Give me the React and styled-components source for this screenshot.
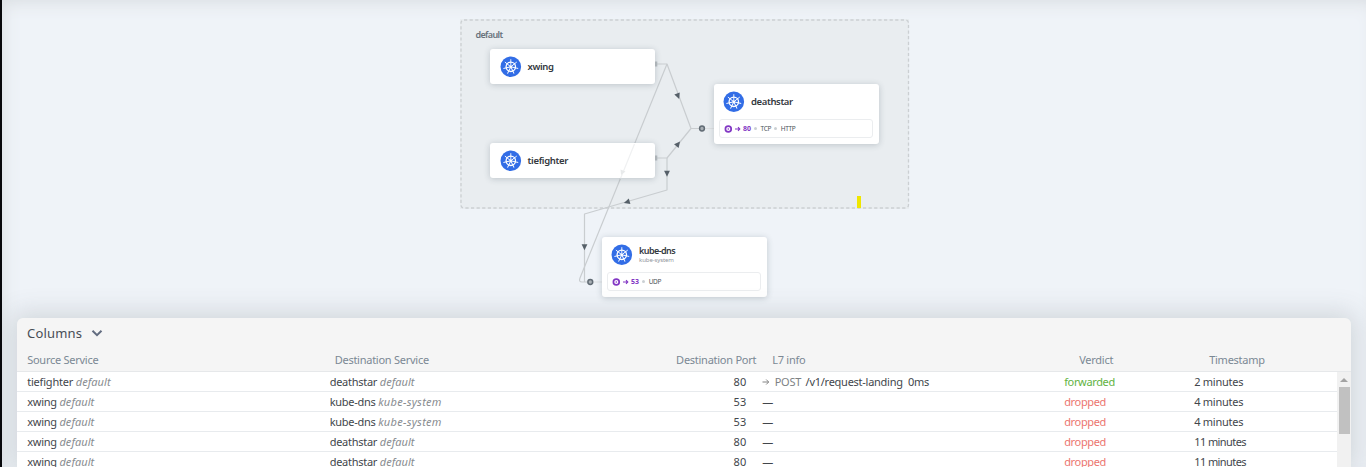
import React from 'react';
import styled, { createGlobalStyle } from 'styled-components';

const Global = createGlobalStyle`
  body { margin: 0; background: #eff3f8; overflow: hidden; font-family: "Noto Sans", "Open Sans", sans-serif; }
  * { box-sizing: border-box; }
`;

const Screen = styled.div`
  position: relative;
  width: 1366px;
  height: 467px;
  overflow: hidden;
  display: flex;
  flex-direction: column;
  background: #eff3f8;
  border-left: 2px solid #08090c;
  box-shadow: inset 0 12px 18px -10px #d9dde1, inset 14px 0 18px -12px #dfe5e9;
`;

const Canvas = styled.div`
  position: relative;
  flex: 0 0 318px;
  margin-left: -2px;
`;

const Namespace = styled.div`
  position: absolute;
  left: 460px;
  top: 19px;
  width: 449px;
  height: 190px;
  background: #e9edf0;
  padding: 9px 15.5px;
  font-size: 9px;
  line-height: 13px;
  font-weight: 600;
  color: #68717b;
  letter-spacing: -0.65px;
`;

const Layer = styled.svg`
  position: absolute;
  left: 0;
  top: 0;
`;

const Card = styled.div`
  position: absolute;
  left: ${p => p.$x}px;
  top: ${p => p.$y}px;
  width: 165.4px;
  height: ${p => (p.$tall ? 60.5 : 35.4)}px;
  border-radius: 3px;
  background: #fff;
  box-shadow: 0 1px 6px rgba(50, 65, 80, 0.24);
  padding: 7px 6px 0 5.5px;
`;

const CardHead = styled.div`
  display: flex;
  align-items: center;
  height: 22px;
  padding-left: 4px;
  gap: 6px;
`;

const Names = styled.div`
  display: flex;
  flex-direction: column;
`;

const Name = styled.span`
  font-size: ${p => p.$size || 10}px;
  line-height: 12px;
  font-weight: 600;
  color: #33383e;
  letter-spacing: ${p => p.$ls || 0}px;
`;

const Sub = styled.span`
  font-size: 6px;
  line-height: 7px;
  letter-spacing: -0.1px;
  color: #90959b;
`;

const PortBox = styled.div`
  display: flex;
  align-items: center;
  height: 19px;
  margin-top: 6.5px;
  padding-left: 4px;
  border: 1px solid #ebedef;
  border-radius: 3px;
  font-size: 6.5px;
  color: #4d535a;
`;

const PortNumber = styled.span`
  font-weight: 700;
  color: #8237c4;
  font-size: 7px;
`;

const Protocol = styled.span`
  display: flex;
  align-items: center;
  letter-spacing: -0.35px;
  &::before {
    content: "";
    width: 3px;
    height: 3px;
    border-radius: 50%;
    background: #cbd0d4;
    margin: 0 3.3px;
  }
`;

const Marker = styled.i`
  position: absolute;
  left: 857px;
  top: 196px;
  width: 4px;
  height: 12px;
  background: #efe600;
`;

const Panel = styled.section`
  position: relative;
  flex: 1 0 auto;
  width: 1334px;
  margin-left: 15.4px;
  height: 149px;
  border-radius: 6px 6px 0 0;
  background: #f5f5f5;
  box-shadow: 0 0 26px 5px rgba(80, 92, 98, 0.19);
`;

const Toolbar = styled.div`
  display: flex;
  align-items: center;
  gap: 9px;
  height: 29px;
  padding: 1px 0 0 9.6px;
  font-size: 13px;
  letter-spacing: 0.18px;
  color: #474d55;
`;

const RowGrid = styled.div`
  display: grid;
  grid-template-columns: 302.5px 300px 116.5px 16px 302px 130px 1fr;
  padding-left: 9.8px;
  align-items: center;
  white-space: nowrap;
  font-size: 11px;
`;

const HeaderRow = styled(RowGrid)`
  grid-template-columns: 307.5px 300px 121.5px 16px 307px 130px 1fr;
  height: 25px;
  border-bottom: 1px solid #e6e8ea;
  color: #7b8894;
  letter-spacing: -0.26px;
`;

const Body = styled.div`
  display: flex;
  height: 95px;
  overflow: hidden;
  background: #fff;
`;

const Rows = styled.div`
  flex: 1;
`;

const Row = styled(RowGrid)`
  height: 20px;
  border-bottom: 1px solid #e8ebee;
  color: #42464b;
`;

const Cell = styled.span`
  text-align: ${p => (p.$right ? 'right' : 'left')};
  letter-spacing: ${p => (p.$ls === undefined ? 'inherit' : `${p.$ls}px`)};
`;

const Ns = styled.em`
  color: #888c90;
  letter-spacing: ${p => p.$ls || 0.05}px;
`;

const Method = styled.span`
  color: #7d8184;
  margin-right: 4.5px;
`;

const Verdict = styled(Cell)`
  color: ${p => (p.$ok ? '#62b33f' : '#ec7670')};
`;

const Scroll = styled.div`
  width: 14.5px;
  background: #f1f1f1;
  display: flex;
  flex-direction: column;
  align-items: center;
`;

const Up = styled.i`
  border: 4px solid transparent;
  border-top: 0;
  border-bottom: 4px solid #a3a3a3;
  margin: 6px 0 5px;
`;

const Thumb = styled.i`
  width: 11px;
  height: 47px;
  background: #c1c1c1;
`;

const spokes = Array.from({ length: 7 }, (_, i) => (i * 360) / 7);

const Kube = () => (
  <svg width="22" height="22" viewBox="0 0 22 22">
    <circle cx="10.8" cy="10.8" r="10.3" fill="#326de6" />
    <g stroke="#fff" fill="none" transform="translate(-.2 -.2)">
      <circle cx="11" cy="11" r="4.7" strokeWidth="1.3" />
      {spokes.map(a => (
        <path key={a} d="M11 9.7V3.8" strokeWidth=".9" strokeLinecap="round" transform={`rotate(${a} 11 11)`} />
      ))}
    </g>
    <circle cx="10.8" cy="10.8" r="1.4" fill="#fff" />
  </svg>
);

const PortIcon = () => (
  <svg width="19" height="10" viewBox="0 0 19 10">
    <circle cx="4.3" cy="5" r="2.9" fill="none" stroke="#8237c4" strokeWidth="1.7" />
    <circle cx="4.3" cy="5" r=".8" fill="#8237c4" />
    <path d="M11 5h4.700M14 3.200 15.800 5l-1.800 1.800" fill="none" stroke="#8237c4" strokeWidth="1.1" />
  </svg>
);

const Service = ({ x, y, name, ns, port, protocols = [], ls, size }) => (
  <Card $x={x} $y={y} $tall={!!port}>
    <CardHead>
      <Kube />
      <Names>
        <Name $ls={ls} $size={size}>{name}</Name>
        {ns && <Sub>{ns}</Sub>}
      </Names>
    </CardHead>
    {port && (
      <PortBox>
        <PortIcon />
        <PortNumber>{port}</PortNumber>
        {protocols.map(p => <Protocol key={p}>{p}</Protocol>)}
      </PortBox>
    )}
  </Card>
);

const arrows = [[678, 96, 69], [678, 144, -52], [667, 173.5, 90], [627, 202, 164], [584.5, 247, 90]];

const Edges = () => (
  <Layer width="1366" height="318">
    <rect x="461" y="20" width="447.5" height="188" rx="3" fill="none" stroke="#cbcfd2" strokeWidth="1.3" strokeDasharray="3.2 2.4" />
    <g fill="none" stroke="#c9cdd0" strokeWidth="1.2" strokeLinejoin="round">
      <path d="M656 64H667L691 128.5H702" />
      <path d="M667 64 580 278Q578.5 282 582 282H590" />
      <path d="M656 158H667L691 128.5" />
      <path d="M667 158V190L584.5 214V282" />
      <path d="M702 128.5H714M590 282H602" stroke="#dfe1e3" />
    </g>
    <path d="M655 61.5h2.3v5h-2.3zM655 155.5h2.3v5h-2.3z" fill="#b9bec2" />
    {arrows.map(([x, y, a]) => (
      <path key={`${x}-${y}`} d="M3.3 0-2.7-2.9V2.9Z" fill="#566069" transform={`translate(${x} ${y}) rotate(${a})`} />
    ))}
    {[[702, 128.5], [590.3, 282]].map(([x, y]) => (
      <circle key={x} cx={x} cy={y} r="2.4" fill="#a9b0b5" stroke="#616b74" strokeWidth="1.5" />
    ))}
  </Layer>
);

const flows = [
  ['tiefighter', 'deathstar', 'default', 80, true, '2 minutes'],
  ['xwing', 'kube-dns', 'kube-system', 53, false, '4 minutes'],
  ['xwing', 'kube-dns', 'kube-system', 53, false, '4 minutes'],
  ['xwing', 'deathstar', 'default', 80, false, '11 minutes'],
  ['xwing', 'deathstar', 'default', 80, false, '11 minutes'],
];

const RequestArrow = () => (
  <svg width="12.5" height="8" viewBox="0 0 12.5 8">
    <path d="M.5 4h6M4.2 1.5 6.7 4 4.2 6.5" fill="none" stroke="#777" strokeWidth=".9" />
  </svg>
);

export default function App() {
  return (
    <Screen>
      <Global />
      <Canvas>
        <Namespace>default</Namespace>
        <Edges />
        <Service x={490} y={49} name="xwing" size={9.5} ls={-0.35} />
        <Service x={490} y={143} name="tiefighter" size={9.5} ls={-0.32} />
        <Service x={713.5} y={83.5} name="deathstar" size={9.5} ls={-0.38} port="80" protocols={['TCP', 'HTTP']} />
        <Service x={601.6} y={236.5} name="kube-dns" size={9} ls={-0.58} ns="kube-system" port="53" protocols={['UDP']} />
        <Layer width="1366" height="318">
          <path d="M634.5 144 620.5 178.5" stroke="#f0f1f2" strokeWidth="1.2" />
          <path d="M621 175l-.5-5.5 5 2z" fill="#e8eaeb" />
        </Layer>
        <Marker />
      </Canvas>
      <Panel>
        <Toolbar>
          Columns
          <svg width="12" height="8" viewBox="0 0 12 8">
            <path d="M1.5 1.7 6 6.1l4.5-4.4" fill="none" stroke="#626c80" strokeWidth="2" />
          </svg>
        </Toolbar>
        <HeaderRow>
          <Cell>Source Service</Cell>
          <Cell>Destination Service</Cell>
          <Cell $right>Destination Port</Cell>
          <span />
          <Cell>L7 info</Cell>
          <Cell>Verdict</Cell>
          <Cell>Timestamp</Cell>
        </HeaderRow>
        <Body>
          <Rows>
            {flows.map(([src, dst, ns, port, ok, time], i) => (
              <Row key={i}>
                <Cell $ls={src === 'xwing' ? -0.25 : -0.2}>{src} <Ns>default</Ns></Cell>
                <Cell $ls={-0.27}>{dst} <Ns $ls={ns === 'kube-system' ? 0.28 : 0.05}>{ns}</Ns></Cell>
                <Cell $right>{port}</Cell>
                <span />
                <Cell $ls={-0.26}>
                  {ok ? <><RequestArrow /><Method>POST</Method>/v1/request-landing&nbsp; 0ms</> : '—'}
                </Cell>
                <Verdict $ok={ok} $ls={-0.35}>{ok ? 'forwarded' : 'dropped'}</Verdict>
                <Cell $ls={time.startsWith('11') ? -0.58 : -0.25}>{time}</Cell>
              </Row>
            ))}
          </Rows>
          <Scroll>
            <Up />
            <Thumb />
          </Scroll>
        </Body>
      </Panel>
    </Screen>
  );
}
